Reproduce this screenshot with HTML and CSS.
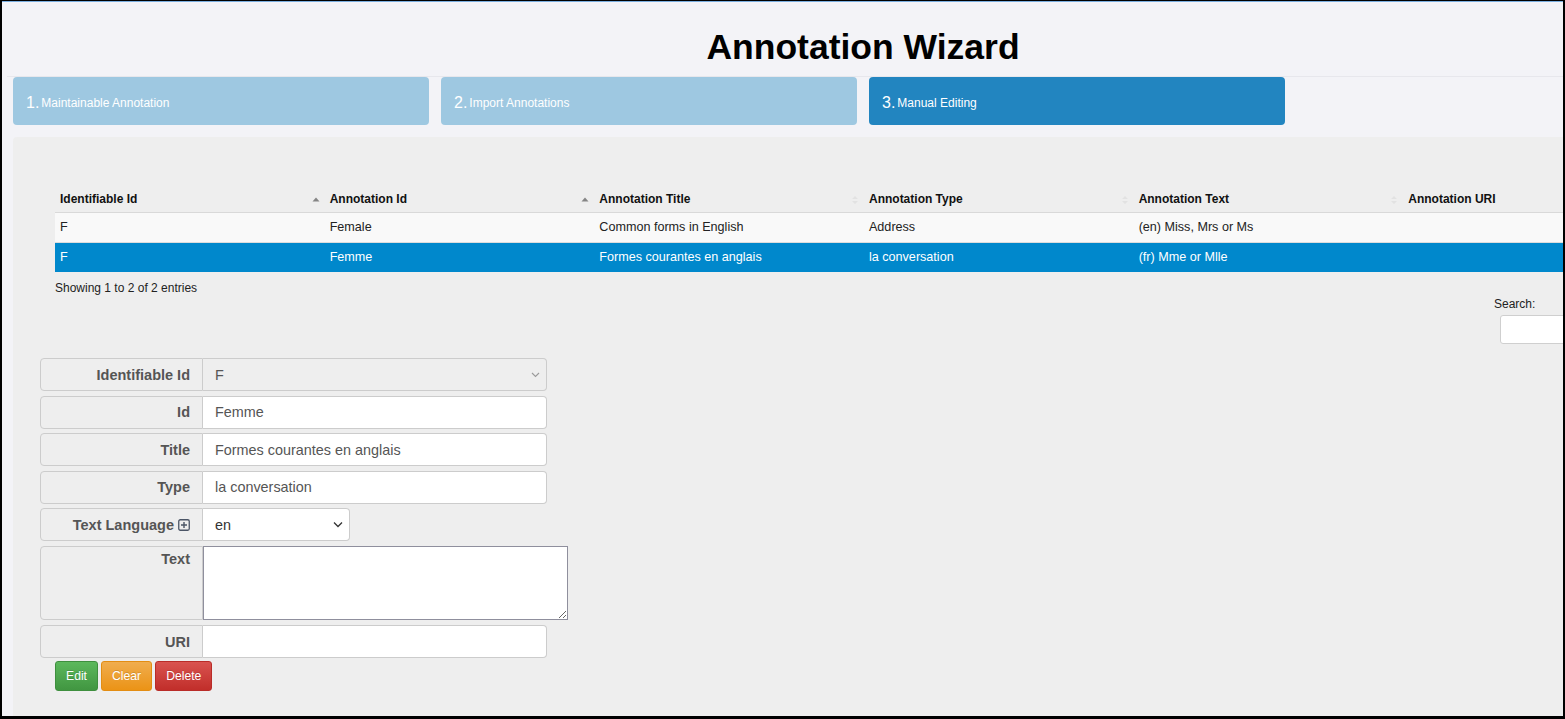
FILE: index.html
```html
<!DOCTYPE html>
<html lang="en">
<head>
<meta charset="utf-8">
<title>Annotation Wizard</title>
<link rel="stylesheet" href="styles.css">
</head>
<body>
<div class="frame">
  <div class="page">
    <header class="wiz-head"><h1>Annotation Wizard</h1></header>
    <nav class="steps">
      <div class="step"><span class="num">1.</span>Maintainable Annotation</div>
      <div class="step"><span class="num">2.</span>Import Annotations</div>
      <div class="step active"><span class="num">3.</span>Manual Editing</div>
      <div class="step blank"></div>
    </nav>
    <main class="panel">
      <section class="dt">
        <table class="grid">
          <thead>
            <tr>
              <th><div class="th"><span>Identifiable Id</span><svg class="sort" width="8" height="10" viewBox="0 0 8 10"><path d="M0.5 6.5 L4 2.5 L7.5 6.5Z" fill="#858585"/></svg></div></th>
              <th><div class="th"><span>Annotation Id</span><svg class="sort" width="8" height="10" viewBox="0 0 8 10"><path d="M0.5 6.5 L4 2.5 L7.5 6.5Z" fill="#858585"/></svg></div></th>
              <th><div class="th"><span>Annotation Title</span><svg class="sort" width="8" height="10" viewBox="0 0 8 10"><path d="M1 4 L4 1 L7 4Z M1 6 L4 9 L7 6Z" fill="#e2e2e2"/></svg></div></th>
              <th><div class="th"><span>Annotation Type</span><svg class="sort" width="8" height="10" viewBox="0 0 8 10"><path d="M1 4 L4 1 L7 4Z M1 6 L4 9 L7 6Z" fill="#e2e2e2"/></svg></div></th>
              <th><div class="th"><span>Annotation Text</span><svg class="sort" width="8" height="10" viewBox="0 0 8 10"><path d="M1 4 L4 1 L7 4Z M1 6 L4 9 L7 6Z" fill="#e2e2e2"/></svg></div></th>
              <th><div class="th"><span>Annotation URI</span><svg class="sort" width="8" height="10" viewBox="0 0 8 10"><path d="M1 4 L4 1 L7 4Z M1 6 L4 9 L7 6Z" fill="#e2e2e2"/></svg></div></th>
            </tr>
          </thead>
          <tbody>
            <tr class="odd">
              <td>F</td><td>Female</td><td>Common forms in English</td><td>Address</td><td>(en) Miss, Mrs or Ms</td><td></td>
            </tr>
            <tr class="selected">
              <td>F</td><td>Femme</td><td>Formes courantes en anglais</td><td>la conversation</td><td>(fr) Mme or Mlle</td><td></td>
            </tr>
          </tbody>
        </table>
        <div class="dt-info">Showing 1 to 2 of 2 entries</div>
        <div class="dt-filter"><label>Search:<input type="search" class="search"></label></div>
      </section>

      <form class="editor">
        <div class="group">
          <label class="addon">Identifiable Id</label>
          <div class="select disabled">
            <select disabled><option>F</option></select>
            <svg class="chev" width="9" height="6" viewBox="0 0 9 6"><path d="M1 1 L4.5 4.5 L8 1" fill="none" stroke="#9a9a9a" stroke-width="1.1"/></svg>
          </div>
        </div>
        <div class="group">
          <label class="addon">Id</label>
          <input class="control" type="text" value="Femme">
        </div>
        <div class="group">
          <label class="addon">Title</label>
          <input class="control" type="text" value="Formes courantes en anglais">
        </div>
        <div class="group">
          <label class="addon">Type</label>
          <input class="control" type="text" value="la conversation">
        </div>
        <div class="group">
          <label class="addon">Text Language<svg class="plus" width="12" height="12" viewBox="0 0 12 12"><rect x="0.75" y="0.75" width="10.5" height="10.5" rx="1.5" fill="none" stroke="#4b5566" stroke-width="1.3"/><path d="M6 3 V9 M3 6 H9" stroke="#4b5566" stroke-width="1.4"/></svg></label>
          <div class="select lang">
            <select><option>en</option><option>fr</option></select>
            <svg class="chev" width="10" height="7" viewBox="0 0 10 7"><path d="M1 1.5 L5 5.5 L9 1.5" fill="none" stroke="#333" stroke-width="1.3"/></svg>
          </div>
        </div>
        <div class="group tall">
          <label class="addon top">Text</label>
          <textarea class="area"></textarea>
        </div>
        <div class="group last">
          <label class="addon">URI</label>
          <input class="control" type="text" value="">
        </div>
        <div class="buttons">
          <button type="button" class="btn edit">Edit</button>
          <button type="button" class="btn clear">Clear</button>
          <button type="button" class="btn delete">Delete</button>
        </div>
      </form>
    </main>
  </div>
</div>
</body>
</html>
```

FILE: styles.css
```css
* { box-sizing: border-box; }
html, body { margin: 0; padding: 0; }
body {
  font-family: "Liberation Sans", Arial, Helvetica, sans-serif;
  background: #000;
}
.frame {
  width: 1565px;
  height: 719px;
  border-style: solid;
  border-color: #000;
  border-width: 1px 2px 3px 2px;
  overflow: hidden;
  background: #f3f3f7;
}
.page {
  border-top: 1px solid #7aaee0;
  width: 1724px;
  height: 100%;
  display: flex;
  flex-direction: column;
}
.wiz-head {
  margin-left: 5px;
  width: 1712px;
  padding: 25px 0 8px;
  border-bottom: 1px solid #e7e7ec;
}
.wiz-head h1 {
  margin: 0;
  text-align: center;
  font-size: 35.5px;
  line-height: 41px;
  font-weight: bold;
  color: #000;
}
.steps {
  margin-left: 11px;
  width: 1700px;
  height: 48px;
  flex: none;
  display: grid;
  grid-template-columns: repeat(4, 1fr);
  gap: 12px;
}
.step {
  border-radius: 4px;
  background: #9ec8e1;
  color: #fff;
  display: flex;
  align-items: center;
  padding: 3px 0 0 13px;
  font-size: 12px;
  line-height: 18px;
}
.step .num { font-size: 16px; margin-right: 2px; }
.step.active { background: #2285c0; }
.step.blank { background: transparent; }

.panel {
  margin: 12px 0 0 11px;
  width: 1700px;
  flex: 1;
  background: #eeeeee;
  border-radius: 4px 4px 0 0;
  padding: 47px 0 0 27px;
}

/* data table */
.dt {
  margin-left: 15px;
  width: 1618px;
  display: flex;
  flex-direction: column;
  font-size: 12px;
  color: #222;
}
.grid {
  width: 1618px;
  border-collapse: collapse;
  table-layout: fixed;
}
.grid th {
  text-align: left;
  font-weight: bold;
  color: #111;
  padding: 8px 5px 5px;
  line-height: 15px;
  border-bottom: 1px solid #d9d9d9;
}
.th {
  display: flex;
  justify-content: space-between;
  align-items: center;
}
.sort { flex: none; }
.grid td {
  padding: 7px 5px;
  line-height: 15px;
  height: 29px;
  font-size: 12.6px;
  white-space: nowrap;
}
.grid tr.odd td {
  background: #f9f9f9;
  border-bottom: 1px solid #dddddd;
}
.grid tr.selected td {
  background: #0088cc;
  color: #fff;
}
.dt-info {
  margin-top: 9px;
  line-height: 15px;
}
.dt-filter {
  align-self: flex-end;
  width: 179px;
  margin-top: 1px;
  line-height: 15px;
}
.dt-filter label { display: block; }
.search {
  display: block;
  margin: 3px 0 0 6px;
  width: 170px;
  height: 29px;
  border: 1px solid #cfcfcf;
  border-radius: 3px;
  background: #fff;
}

/* editor form */
.editor {
  margin-top: 14px;
  width: 507px;
}
.group {
  display: flex;
  height: 33px;
  margin-bottom: 4.5px;
}
.group.tall {
  height: 74px;
  width: 528px;
  margin-bottom: 5.5px;
}
.group.last { margin-bottom: 3px; }
.addon {
  flex: none;
  width: 163px;
  display: flex;
  align-items: center;
  justify-content: flex-end;
  gap: 4px;
  padding: 0 12px 0 0;
  background: #eeeeee;
  border: 1px solid #cccccc;
  border-radius: 4px 0 0 4px;
  color: #555;
  font-weight: bold;
  font-size: 14.5px;
}
.addon.top {
  align-items: flex-start;
  padding-top: 4px;
}
.plus { flex: none; }
.control {
  flex: 1;
  min-width: 0;
  border: 1px solid #cccccc;
  border-left: none;
  border-radius: 0 4px 4px 0;
  background: #fff;
  padding: 0 12px;
  font-family: "Liberation Sans", Arial, sans-serif;
  font-size: 14.4px;
  color: #555;
}
.select {
  flex: 1;
  display: flex;
  align-items: center;
  border: 1px solid #cccccc;
  border-left: none;
  border-radius: 0 4px 4px 0;
  background: #fff;
  padding-right: 6px;
}
.select.disabled { background: #eeeeee; }
.select.lang { flex: none; width: 147px; }
.select select {
  flex: 1;
  min-width: 0;
  height: 100%;
  appearance: none;
  -webkit-appearance: none;
  border: none;
  background: transparent;
  padding: 0 12px;
  font-family: "Liberation Sans", Arial, sans-serif;
  font-size: 14.4px;
  color: #555;
  opacity: 1;
}
.select.lang select { color: #333; }
.chev { flex: none; }
.area {
  flex: 1;
  margin: 0;
  border: 1px solid #8f8f9d;
  border-radius: 0;
  background: #fff;
  font-family: "Liberation Sans", Arial, sans-serif;
  font-size: 14px;
}
.buttons {
  margin-left: 15px;
  display: flex;
  gap: 3px;
}
.btn {
  height: 30px;
  padding: 0 10px;
  border-radius: 3px;
  font-family: "Liberation Sans", Arial, sans-serif;
  font-size: 12.2px;
  color: #fff;
  border: 1px solid;
  text-shadow: 0 -1px 0 rgba(0,0,0,0.15);
}
.btn.edit {
  background: linear-gradient(#5cb85c, #419641);
  border-color: #3e8f3e;
}
.btn.clear {
  background: linear-gradient(#f0ad4e, #eb9316);
  border-color: #e38d13;
}
.btn.delete {
  background: linear-gradient(#d9534f, #c12e2a);
  border-color: #b92c28;
}
```
